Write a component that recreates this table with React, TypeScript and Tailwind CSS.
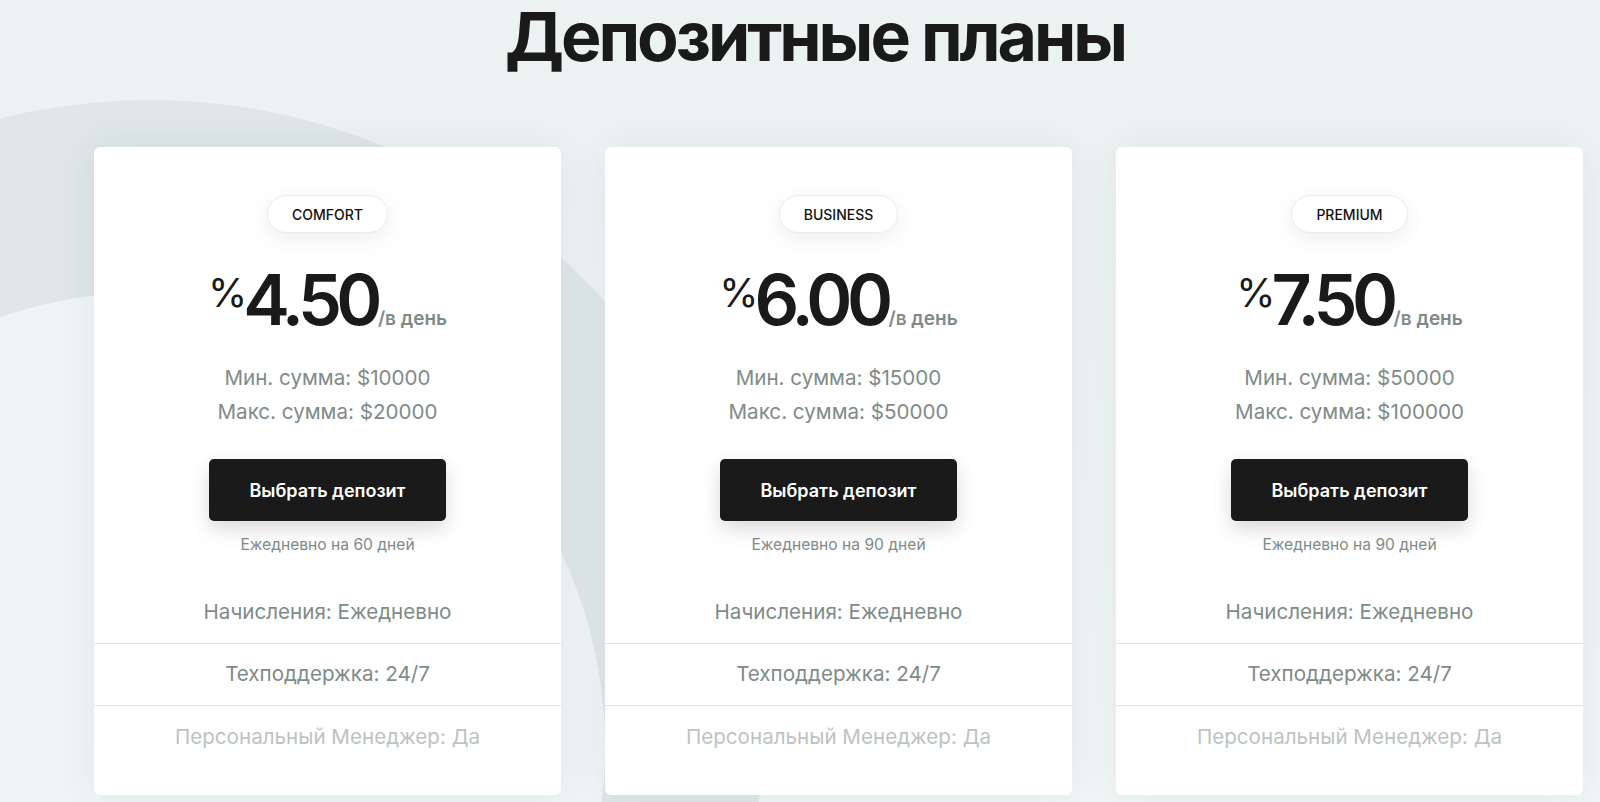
const plans = [
  { name: "COMFORT", rate: "4.50", min: "$10000", max: "$20000", days: 60 },
  { name: "BUSINESS", rate: "6.00", min: "$15000", max: "$50000", days: 90 },
  { name: "PREMIUM", rate: "7.50", min: "$50000", max: "$100000", days: 90 },
];

function PlanCard({ plan }: { plan: (typeof plans)[number] }) {
  return (
    <div className="flex w-[467px] shrink-0 flex-col items-center rounded-md bg-white pt-[48px] pb-[27px] shadow-[0_0_40px_rgba(40,60,60,0.08)]">
      <span className="flex h-[38px] items-center rounded-full border border-[#ececec] bg-white px-[24px] text-[14px] font-medium text-[#111] shadow-[0_6px_22px_rgba(0,0,0,0.07)]">
        {plan.name}
      </span>

      <div className="mt-[32px] flex items-baseline leading-none">
        <span className="mt-[8px] -mr-[4px] self-start text-[40px] font-normal leading-none text-[#1a1a1a]">%</span>
        <span className="text-[70px] font-semibold leading-none tracking-[-0.08em] text-[#1a1a1a]">
          {plan.rate}
        </span>
        <span className="ml-[1px] text-[19px] font-semibold leading-none text-[#7e8b88]">/в день</span>
      </div>

      <div className="mt-[26px] text-center text-[20.6px] leading-[34px] text-[#7e8b88]">
        <p>Мин. сумма: {plan.min}</p>
        <p>Макс. сумма: {plan.max}</p>
      </div>

      <button className="mt-[30px] h-[62px] w-[237px] rounded-[5px] bg-[#1a1a1a] text-[18px] font-semibold text-white shadow-[0_8px_20px_rgba(0,0,0,0.15)]">
        Выбрать депозит
      </button>
      <p className="mt-[14px] text-[15.6px] leading-[20px] text-[#7e8b88]">
        Ежедневно на {plan.days} дней
      </p>

      <div className="mt-[27px] w-full text-center text-[20.6px] text-[#7e8b88]">
        <div className="flex h-[62px] items-center justify-center border-b border-[#e2e5e5]">
          Начисления: Ежедневно
        </div>
        <div className="flex h-[62px] items-center justify-center border-b border-[#e2e5e5]">
          Техподдержка: 24/7
        </div>
        <div className="flex h-[62px] items-center justify-center text-[#bcc3c2]">
          Персональный Менеджер: Да
        </div>
      </div>
    </div>
  );
}

export default function App() {
  return (
    <div className="relative h-[802px] w-full overflow-hidden bg-gradient-to-b from-[#ecf2f2] to-[#f1f6f6] font-['Inter',sans-serif]">
      {/* background rings */}
      <div className="absolute left-[-465px] top-[100px] h-[1230px] w-[1230px] rounded-full bg-[#dfe7e7]" />
      <div className="absolute left-[-305px] top-[292px] h-[910px] w-[910px] rounded-full bg-[#eff5f5]" />

      <div className="relative">
        <h2 className="pt-[2px] pl-[30px] text-center text-[68px] font-bold leading-none tracking-[-0.045em] text-[#1a1a1a]">
          Депозитные планы
        </h2>

        <div className="mt-[77px] flex gap-[44px] pl-[94px]">
          {plans.map((p) => (
            <PlanCard key={p.name} plan={p} />
          ))}
        </div>
      </div>
    </div>
  );
}
